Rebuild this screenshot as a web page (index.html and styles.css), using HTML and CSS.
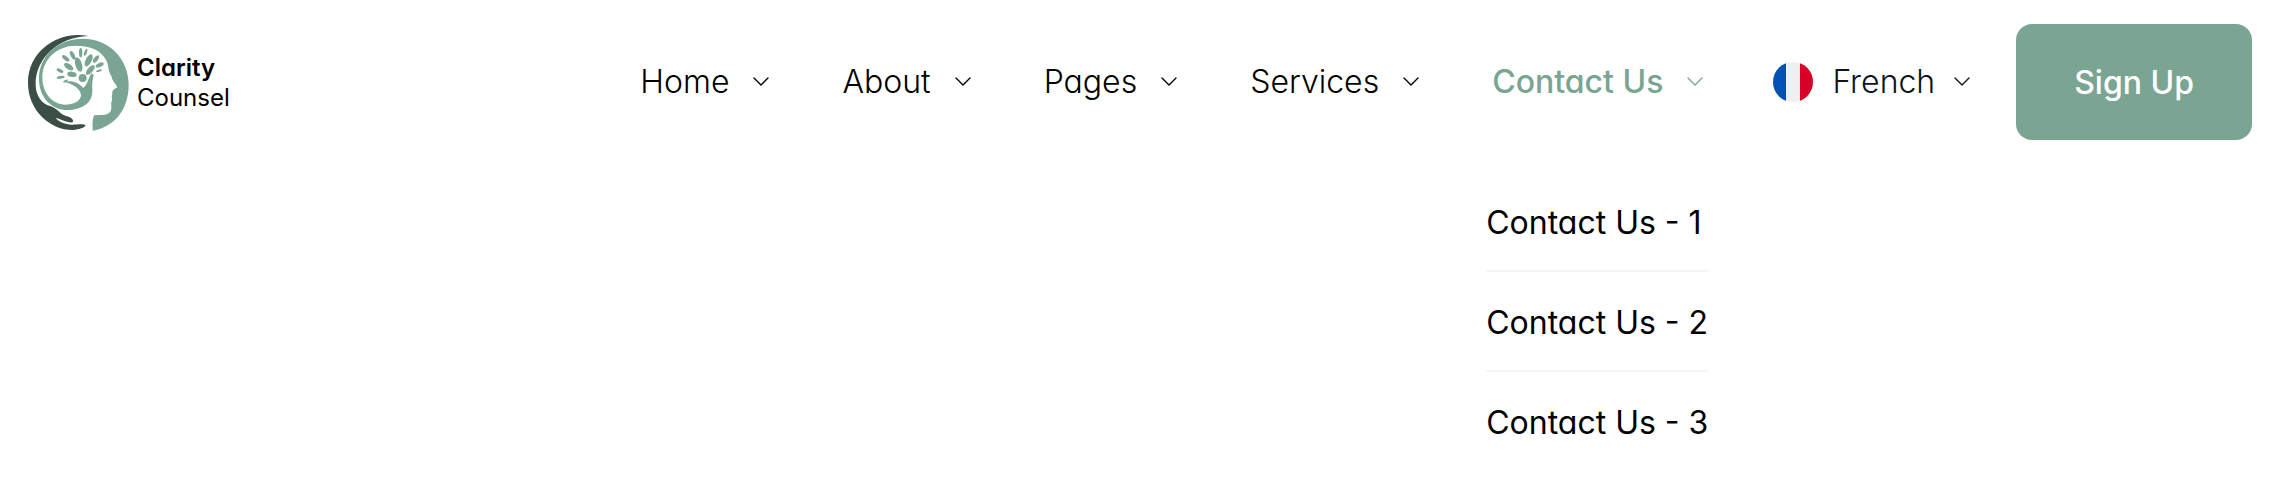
FILE: index.html
```html
<!DOCTYPE html>
<html lang="en">
<head>
<meta charset="utf-8">
<meta name="viewport" content="width=device-width, initial-scale=1">
<title>Clarity Counsel</title>
<link rel="stylesheet" href="styles.css">
</head>
<body>
<svg class="defs" aria-hidden="true">
  <symbol id="chevron" viewBox="0 0 16 10"><path d="M1 1l7 7 7-7" fill="none" stroke="currentColor" stroke-width="1.4" stroke-linecap="round" stroke-linejoin="round"/></symbol>
</svg>
<header class="header">
  <a class="brand" href="#">
    <svg class="brand-mark" viewBox="24 24 303 291" aria-hidden="true">
      <path fill="#3a4e45" d="M205 30C125 12 24 68 24 170C24 255 92 312 158 312C178 311 194 305 197 298C188 292 170 297 152 296C130 294 114 285 107 276C122 278 140 291 158 289C163 279 150 273 138 270C119 264 112 246 90 240C66 234 48 211 47 178C44 104 108 34 205 30Z"/>
      <path fill="#7aa592" d="M57 158C57 90 112 38 190 38C266 38 326 98 326 176C326 252 282 303 218 314C218 298 216 284 222 268C244 266 268 270 273 252C276 244 272 236 274 228C279 222 273 214 277 204C276 194 279 190 291 185C293 178 276 166 274 150C262 132 268 116 256 98C238 70 208 59 166 59C112 59 67 100 67 154C67 202 98 236 136 236C164 236 184 222 183 207C182 190 160 174 134 168C154 161 176 170 190 186C202 176 205 158 214 142L221 146C216 168 217 178 217 198C216 232 184 252 142 252C94 252 57 214 57 158Z"/>
      <g fill="#7aa592">
        <circle cx="188" cy="156" r="12"/>
        <ellipse cx="176" cy="116" rx="10" ry="22" transform="rotate(-16 176 116)"/>
        <ellipse cx="206" cy="103" rx="9" ry="20" transform="rotate(28 206 103)"/>
        <ellipse cx="211" cy="132" rx="8" ry="18" transform="rotate(42 211 132)"/>
        <ellipse cx="146" cy="122" rx="8" ry="16" transform="rotate(-55 146 122)"/>
        <ellipse cx="156" cy="145" rx="8" ry="14" transform="rotate(-82 156 145)"/>
        <ellipse cx="158" cy="88" rx="6" ry="14" transform="rotate(-28 158 88)"/>
        <ellipse cx="182" cy="80" rx="5" ry="14"/>
        <ellipse cx="197" cy="79" rx="4" ry="11" transform="rotate(18 197 79)"/>
        <ellipse cx="137" cy="97" rx="6" ry="13" transform="rotate(-50 137 97)"/>
        <ellipse cx="120" cy="134" rx="5" ry="11" transform="rotate(-65 120 134)"/>
        <ellipse cx="122" cy="154" rx="4" ry="12" transform="rotate(82 122 154)"/>
        <ellipse cx="137" cy="165" rx="3" ry="8" transform="rotate(65 137 165)"/>
        <ellipse cx="228" cy="99" rx="6" ry="13" transform="rotate(36 228 99)"/>
        <ellipse cx="239" cy="117" rx="6" ry="13" transform="rotate(65 239 117)"/>
        <ellipse cx="237" cy="134" rx="3" ry="9" transform="rotate(75 237 134)"/>
      </g>
    </svg>
    <span class="brand-name"><b class="brand-strong">Clarity</b><span>Counsel</span></span>
  </a>

  <nav class="nav" aria-label="Main">
    <ul class="menu">
      <li class="menu-item"><a class="menu-link" href="#">Home<svg class="chevron"><use href="#chevron"/></svg></a></li>
      <li class="menu-item"><a class="menu-link" href="#">About<svg class="chevron"><use href="#chevron"/></svg></a></li>
      <li class="menu-item"><a class="menu-link" href="#">Pages<svg class="chevron"><use href="#chevron"/></svg></a></li>
      <li class="menu-item"><a class="menu-link" href="#">Services<svg class="chevron"><use href="#chevron"/></svg></a></li>
      <li class="menu-item">
        <a class="menu-link menu-link-active" href="#" aria-expanded="true">Contact Us<svg class="chevron"><use href="#chevron"/></svg></a>
        <ul class="submenu">
          <li class="submenu-item"><a class="submenu-link" href="#">Contact Us - 1</a></li>
          <li class="submenu-item"><a class="submenu-link" href="#">Contact Us - 2</a></li>
          <li class="submenu-item"><a class="submenu-link" href="#">Contact Us - 3</a></li>
        </ul>
      </li>
    </ul>
  </nav>

  <button class="language" type="button">
    <svg class="flag" viewBox="0 0 40 40" aria-hidden="true">
      <clipPath id="disc"><circle cx="20" cy="20" r="20"/></clipPath>
      <g clip-path="url(#disc)"><path fill="#f0f0f0" d="M0 0h40v40H0z"/><path fill="#0052b4" d="M0 0h13v40H0z"/><path fill="#d80027" d="M27 0h13v40H27z"/></g>
    </svg>
    French
    <svg class="chevron"><use href="#chevron"/></svg>
  </button>
  <button class="signup" type="button">Sign Up</button>
</header>
</body>
</html>
```
FILE: styles.css
```css
* { box-sizing: border-box; }

body {
  min-height: 100vh;
  margin: 0;
  background: #fff;
  color: #000;
  font-family: Inter, "Liberation Sans", sans-serif;
  font-feature-settings: "cv11";
  font-size: 32px;
  font-weight: 300;
  line-height: 40px;
}

a { color: inherit; text-decoration: none; }
ul { margin: 0; padding: 0; list-style: none; }
button {
  border: 0;
  background: none;
  font: inherit;
  font-feature-settings: inherit;
  cursor: pointer;
}

.defs { position: absolute; width: 0; height: 0; }

.header {
  display: flex;
  align-items: center;
  padding: 24px 28px;
}

.brand { display: flex; align-items: center; gap: 8px; }
.brand-mark { width: 101px; height: 97px; }
.brand-name {
  display: flex;
  flex-direction: column;
  padding-top: 2px;
  font-size: 24px;
  font-weight: 400;
  line-height: 30px;
}
.brand-strong { font-weight: 600; }

.nav { margin-left: auto; }
.menu { display: flex; gap: 73px; }
.menu-item { position: relative; }
.menu-link { display: flex; align-items: center; gap: 24px; white-space: nowrap; }
.menu-link-active { color: #7aa592; font-weight: 500; }

.chevron { flex: none; width: 16px; height: 10px; }

.submenu {
  position: absolute;
  top: 100%;
  left: -6px;
  padding-top: 70px;
  font-weight: 400;
  white-space: nowrap;
}
.submenu-item + .submenu-item { border-top: 2px solid #f2f6f4; }
.submenu-link { display: block; padding: 31px 0 27px; }

.language {
  display: flex;
  align-items: center;
  gap: 19px;
  margin-left: 70px;
  padding: 0;
  color: #0b1420;
}
.flag { width: 40px; height: 40px; }

.signup {
  margin-left: 46px;
  padding: 39px 58px 37px;
  border-radius: 16px;
  background: #7aa592;
  color: #fff;
  font-weight: 500;
}
```
